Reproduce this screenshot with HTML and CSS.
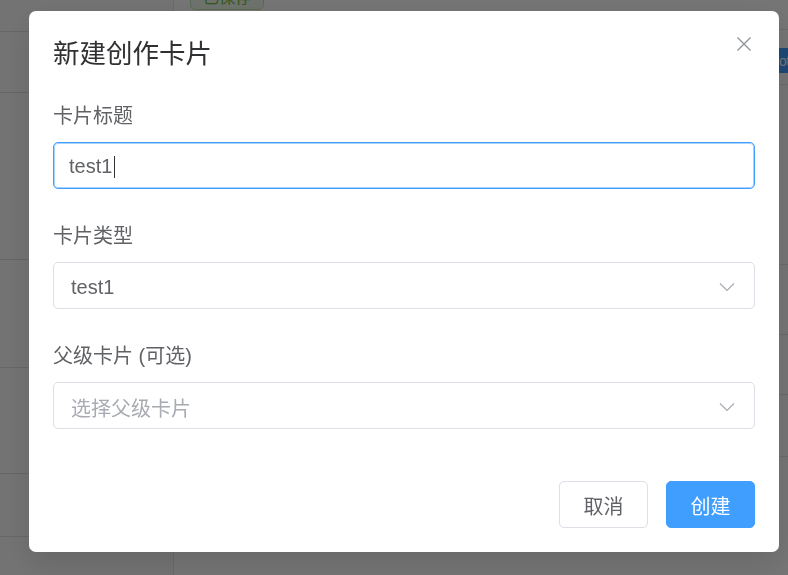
FILE: index.html
```html
<!DOCTYPE html>
<html>
<head>
  <meta charset="utf-8">
  <title>新建创作卡片</title>
  <link rel="stylesheet" href="styles.css">
</head>
<body>
  <div class="page">
    <div class="side">
      <div class="side-row" style="height: 32px"></div>
      <div class="side-row" style="height: 61px"></div>
      <div class="side-row" style="height: 167px"></div>
      <div class="side-row" style="height: 108px"></div>
      <div class="side-row" style="height: 106px"></div>
      <div class="side-row" style="height: 63px"></div>
    </div>
    <div class="main">
      <div class="main-row top-row">
        <span class="tag">已保存</span>
      </div>
      <div class="main-row tool-row">
        <button class="bg-btn">ot</button>
      </div>
      <div class="main-row" style="height: 180px"></div>
      <div class="main-row" style="height: 70px"></div>
      <div class="main-row" style="height: 60px"></div>
      <div class="main-row" style="height: 62px"></div>
    </div>
  </div>

  <div class="overlay"></div>

  <div class="dialog">
    <div class="dialog-header">
      <span class="dialog-title">新建创作卡片</span>
      <button class="dialog-close" aria-label="关闭">
        <svg width="16" height="16" viewBox="0 0 16 16">
          <path d="M1.5 1.5 L14.5 14.5 M14.5 1.5 L1.5 14.5" stroke="#909399" stroke-width="1.4" fill="none"/>
        </svg>
      </button>
    </div>
    <div class="dialog-body">
      <div class="form-item">
        <label class="form-label">卡片标题</label>
        <div class="input is-focus">
          <span class="input-text">test1</span><span class="caret"></span>
        </div>
      </div>
      <div class="form-item">
        <label class="form-label">卡片类型</label>
        <div class="select">
          <span class="select-text">test1</span>
          <svg class="arrow" width="16" height="10" viewBox="0 0 16 10">
            <path d="M1 1.5 L8 8.5 L15 1.5" stroke="#a8abb2" stroke-width="1.2" fill="none"/>
          </svg>
        </div>
      </div>
      <div class="form-item">
        <label class="form-label">父级卡片 (可选)</label>
        <div class="select">
          <span class="select-text placeholder">选择父级卡片</span>
          <svg class="arrow" width="16" height="10" viewBox="0 0 16 10">
            <path d="M1 1.5 L8 8.5 L15 1.5" stroke="#a8abb2" stroke-width="1.2" fill="none"/>
          </svg>
        </div>
      </div>
    </div>
    <div class="dialog-footer">
      <button class="btn">取消</button>
      <button class="btn btn-primary">创建</button>
    </div>
  </div>
</body>
</html>
```

FILE: styles.css
```css
:root {
  --primary-color: #409eff;
  --text-title: #303133;
  --text-regular: #606266;
  --text-placeholder: #a8abb2;
  --border-color: #dcdfe6;
}

html, body {
  height: 100%;
  margin: 0;
  padding: 0;
  font-family: 'Liberation Sans', 'Noto Sans CJK SC', sans-serif;
  color: var(--text-regular);
  background-color: #ffffff;
  overflow: hidden;
}

/* 背景页面 */
.page {
  display: flex;
  height: 100%;
}

.side {
  width: 173px;
  flex-shrink: 0;
  border-right: 1px solid #e4e7ed;
  background-color: #fafafa;
}

.side-row {
  border-bottom: 1px solid #e0e0e0;
  box-sizing: border-box;
}

.main {
  flex: 1;
  padding: 0 0 0 16px;
}

.main-row {
  border-bottom: 1px solid #e4e7ed;
  box-sizing: border-box;
}

.top-row {
  height: 44px;
  margin-top: -14px;
}

.tag {
  display: inline-block;
  height: 22px;
  line-height: 22px;
  padding: 0 12px;
  border: 1px solid #c2e7b0;
  border-radius: 5px;
  background-color: #f0f9eb;
  color: #67c23a;
  font-size: 16px;
}

.tool-row {
  height: 55px;
  display: flex;
  justify-content: flex-end;
  align-items: flex-start;
  padding-top: 18px;
}

.bg-btn {
  height: 25px;
  width: 13px;
  padding: 0 0 0 4px;
  border: none;
  background-color: var(--primary-color);
  color: #fff;
  font-size: 14px;
  font-family: inherit;
  letter-spacing: -0.5px;
  text-align: left;
  white-space: nowrap;
  overflow: hidden;
}

.overlay {
  position: fixed;
  inset: 0;
  background-color: rgba(0, 0, 0, 0.54);
}

/* 对话框 */
.dialog {
  position: fixed;
  left: 29px;
  top: 11px;
  width: 750px;
  height: 541px;
  box-sizing: border-box;
  padding: 24px;
  background-color: #ffffff;
  border-radius: 7px;
  box-shadow: 0 12px 32px rgba(0, 0, 0, 0.12);
}

.dialog-header {
  display: flex;
  align-items: center;
  justify-content: space-between;
  height: 36px;
}

.dialog-title {
  font-size: 26.5px;
  color: var(--text-title);
  line-height: 36px;
  padding-top: 2px;
}

.dialog-close {
  border: none;
  background: none;
  padding: 0;
  margin: 0 3px 18px 0;
  width: 16px;
  height: 16px;
  cursor: pointer;
}

.dialog-close svg {
  display: block;
}

.dialog-body {
  padding-top: 29px;
}

.form-item {
  margin-bottom: 31px;
}

.form-item:last-child {
  margin-bottom: 0;
}

.form-label {
  display: block;
  height: 30px;
  line-height: 32px;
  font-size: 20px;
  color: var(--text-regular);
  margin-bottom: 12px;
}

.input,
.select {
  height: 47px;
  box-sizing: border-box;
  border: 1px solid var(--border-color);
  border-radius: 5px;
  display: flex;
  align-items: center;
  font-size: 20px;
  color: var(--text-regular);
}

.input {
  padding: 0 15px;
}

.input-text {
  padding-top: 2px;
}

.input.is-focus {
  border-color: var(--primary-color);
  box-shadow: inset 0 0 0 1px rgba(64, 158, 255, 0.45);
}

.caret {
  display: inline-block;
  width: 0;
  height: 22px;
  border-left: 1.5px solid var(--text-title);
  margin: 2px 0 0 2px;
}

.select {
  padding: 0 19px 0 17px;
  justify-content: space-between;
}

.select-text {
  padding-top: 4px;
}

.placeholder {
  color: var(--text-placeholder);
}

.arrow {
  display: block;
  margin-top: 3px;
}

.dialog-footer {
  display: flex;
  justify-content: flex-end;
  gap: 18px;
  margin-top: 52px;
}

.btn {
  width: 89px;
  height: 47px;
  padding-top: 3px;
  border: 1px solid var(--border-color);
  border-radius: 5px;
  background-color: #ffffff;
  color: var(--text-regular);
  font-size: 20px;
  font-family: inherit;
  cursor: pointer;
}

.btn-primary {
  background-color: var(--primary-color);
  border-color: var(--primary-color);
  color: #ffffff;
}
```
